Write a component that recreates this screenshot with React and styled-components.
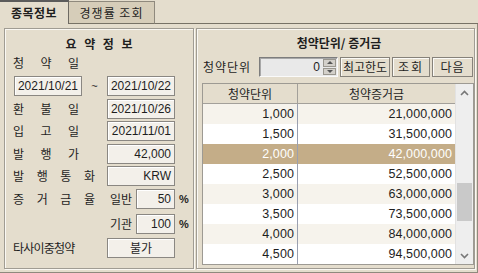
import React from "react";
import styled, { createGlobalStyle } from "styled-components";

const BG = "#e4ddcd";
const KR = `"Noto Sans CJK KR", "Liberation Sans", sans-serif`;
const NUM = `"Liberation Sans", "Noto Sans CJK KR", sans-serif`;

const Global = createGlobalStyle`
  html, body { margin: 0; padding: 0; background: ${BG}; }
  body { font-family: ${KR}; font-size: 12px; color: #1e1e1e; }
  * { box-sizing: border-box; }
`;

const Window = styled.div`
  width: 478px;
  height: 273px;
  display: flex;
  flex-direction: column;
  background: ${BG};
  overflow: hidden;
`;

const TabBar = styled.div`
  display: flex;
  align-items: flex-end;
  height: 24px;
`;

const Tab = styled.div`
  display: flex;
  align-items: center;
  justify-content: center;
  line-height: 14px;
  font-size: 12px;
  width: ${(p) => p.$w}px;
  height: ${(p) => (p.$active ? 24 : 23)}px;
  font-weight: ${(p) => (p.$active ? 700 : 400)};
  letter-spacing: ${(p) => (p.$active ? 0.5 : 1)}px;
  background: ${(p) => (p.$active ? BG : "#d6cdb9")};
  border-top: ${(p) => (p.$active ? "2px solid #5b5b5b" : "1px solid #8f897d")};
  border-right: 1px solid ${(p) => (p.$active ? "#6e6a63" : "#8f897d")};
  border-bottom: ${(p) => (p.$active ? "none" : "1px solid #777266")};
  padding-top: ${(p) => (p.$active ? 0 : 1)}px;
`;

const TabFill = styled.div`
  flex: 1;
  height: 1px;
  background: #777266;
`;

const Body = styled.div`
  flex: 1;
  display: flex;
  gap: 2px;
  padding: 4px 2px 3px 4px;
  border-right: 1px solid #8f897d;
  border-bottom: 1px solid #8f897d;
`;

const Panel = styled.div`
  width: ${(p) => p.$w}px;
  height: 241px;
  border: 1px solid #a09c93;
  box-shadow: inset 1px 1px 0 #faf8f3, 1px 1px 0 #faf8f3;
  display: flex;
  flex-direction: column;
`;

const LeftPanel = styled(Panel)`
  padding: 7px 0 0 8px;
`;

const RightPanel = styled(Panel)`
  padding: 6px 0 0 3px;
`;

const Title = styled.div`
  height: 16px;
  line-height: 16px;
  font-weight: 700;
  font-size: 12px;
  display: flex;
  justify-content: ${(p) => (p.$spread ? "space-between" : "center")};
  width: ${(p) => (p.$w ? `${p.$w}px` : "auto")};
  margin: 0 ${(p) => (p.$spread ? "auto" : "0")};
  position: relative;
  left: ${(p) => p.$shift || 0}px;
  letter-spacing: ${(p) => p.$ls || 0}px;
`;

const Spread = styled.div`
  width: ${(p) => p.$w}px;
  display: flex;
  justify-content: space-between;
  line-height: 16px;
`;

const LabelRow = styled.div`
  height: 16px;
  margin-top: 3px;
  display: flex;
  align-items: center;
`;

const RowList = styled.div`
  display: flex;
  flex-direction: column;
  gap: 2.5px;
  margin-top: 5px;
`;

const Row = styled.div`
  display: flex;
  align-items: center;
  height: 20px;
  margin-top: ${(p) => p.$extra || 0}px;
`;

const LabelCell = styled.div`
  width: 94px;
  display: flex;
  align-items: center;
  letter-spacing: ${(p) => p.$ls || 0}px;
  white-space: nowrap;
`;

const Field = styled.div`
  width: ${(p) => p.$w}px;
  height: 20px;
  margin-left: ${(p) => p.$ml || 0}px;
  border: 1px solid #8a8782;
  box-shadow: inset 1px 1px 0 #ffffff;
  background: #f3f0ea;
  display: flex;
  align-items: center;
  justify-content: ${(p) =>
    p.$align === "center" ? "center" : p.$align === "left" ? "flex-start" : "flex-end"};
  padding: 0 3px;
  font-family: ${(p) => (p.$kr ? KR : NUM)};
  font-size: 12px;
  line-height: 14px;
  white-space: nowrap;
`;

const Tilde = styled.div`
  width: 25px;
  text-align: center;
  font-family: ${NUM};
  font-size: 11px;
`;

const SubLabel = styled.div`
  width: 29px;
  padding-left: 3px;
  line-height: 16px;
`;

const Percent = styled.div`
  margin-left: 4px;
  font-family: ${NUM};
  font-size: 11px;
  font-weight: 700;
`;

/* right panel */
const Controls = styled.div`
  display: flex;
  align-items: center;
  height: 20px;
  margin-top: 6px;
`;

const CtlLabel = styled.div`
  width: 59px;
  padding-left: 3px;
  letter-spacing: 1px;
  line-height: 16px;
`;

const Spin = styled.div`
  width: 79px;
  height: 20px;
  display: flex;
  border-top: 1px solid #7d7d7d;
  border-left: 1px solid #7d7d7d;
  border-bottom: 1px solid #fafafa;
  border-right: 1px solid #fafafa;
  background: #e9e9e9;
  box-shadow: inset 1px 1px 0 #a8a8a8;
`;

const SpinValue = styled.div`
  flex: 1;
  display: flex;
  align-items: center;
  justify-content: flex-end;
  padding-right: 3px;
  font-family: ${NUM};
  font-size: 12px;
`;

const SpinButtons = styled.div`
  width: 14px;
  display: flex;
  flex-direction: column;
  padding: 1px 1px 1px 0;
  gap: 1px;
`;

const SpinBtn = styled.div`
  flex: 1;
  background: #d3d0ca;
  border: 1px solid #9a978f;
  display: flex;
  align-items: center;
  justify-content: center;
  &::after {
    content: "";
    width: 0;
    height: 0;
    border-left: 3px solid transparent;
    border-right: 3px solid transparent;
    ${(p) =>
      p.$up
        ? "border-bottom: 3px solid #555;"
        : "border-top: 3px solid #555;"}
  }
`;

const Button = styled.div`
  width: ${(p) => p.$w}px;
  height: 20px;
  margin-left: ${(p) => p.$ml}px;
  border: 1px solid #86827a;
  box-shadow: inset 1px 1px 0 #fbfaf6;
  background: ${BG};
  display: flex;
  align-items: center;
  justify-content: center;
  line-height: 14px;
  letter-spacing: ${(p) => p.$ls || 0}px;
  white-space: nowrap;
`;

const Grid = styled.div`
  margin: 6px 0 0 2px;
  width: 272px;
  height: 182px;
  border: 1px solid #9d9a93;
  display: flex;
  background: #fff;
`;

const Table = styled.div`
  display: grid;
  grid-template-columns: 95px 157px;
  grid-auto-rows: 20px;
  align-content: start;
`;

const HeadCell = styled.div`
  background: ${BG};
  border-bottom: 1px solid #a3a09a;
  border-right: 1px solid #a3a09a;
  display: flex;
  align-items: center;
  justify-content: center;
  line-height: 14px;
`;

const Cell = styled.div`
  display: flex;
  align-items: center;
  justify-content: flex-end;
  padding-right: ${(p) => (p.$first ? 3 : 3)}px;
  font-family: ${NUM};
  font-size: 12.5px;
  letter-spacing: 0.1px;
  background: ${(p) => (p.$sel ? "#c4ad88" : p.$alt ? "#f6f3ec" : "#ffffff")};
  color: ${(p) => (p.$sel ? "#ffffff" : "#1e1e1e")};
  border-right: ${(p) => (p.$first ? "1px solid #9aa0b0" : "none")};
`;

const Scroll = styled.div`
  width: 18px;
  display: flex;
  flex-direction: column;
  background: #eeeeee;
  border-left: 1px solid #e2e2e2;
`;

const ScrollArrow = styled.div`
  height: 17px;
  display: flex;
  align-items: center;
  justify-content: center;
  color: #7a7a7a;
`;

const Track = styled.div`
  flex: 1;
  display: flex;
  flex-direction: column;
`;

const Thumb = styled.div`
  width: 15px;
  margin-left: 1px;
  height: 38px;
  background: #c9c9c9;
`;

const Chevron = ({ up }) => (
  <svg width="9" height="6" viewBox="0 0 9 6">
    <path
      d={up ? "M1 5 L4.5 1.5 L8 5" : "M1 1 L4.5 4.5 L8 1"}
      fill="none"
      stroke="#777"
      strokeWidth="1.6"
    />
  </svg>
);

const SpreadText = ({ text, w }) => (
  <Spread $w={w}>
    {text.split("").map((c, i) => (
      <span key={i}>{c}</span>
    ))}
  </Spread>
);

const rows = [
  ["1,000", "21,000,000"],
  ["1,500", "31,500,000"],
  ["2,000", "42,000,000"],
  ["2,500", "52,500,000"],
  ["3,000", "63,000,000"],
  ["3,500", "73,500,000"],
  ["4,000", "84,000,000"],
  ["4,500", "94,500,000"],
];
const selected = 2;

export default function App() {
  const thumbTop = 82;
  return (
    <Window>
      <Global />
      <TabBar>
        <Tab $active $w={69}>종목정보</Tab>
        <Tab $w={86}>경쟁률 조회</Tab>
        <TabFill />
      </TabBar>
      <Body>
        <LeftPanel $w={190}>
          <Title $spread $w={67} $shift={-4}>
            <span>요</span>
            <span>약</span>
            <span>정</span>
            <span>보</span>
          </Title>
          <LabelRow>
            <SpreadText text="청약일" w={66} />
          </LabelRow>
          <RowList>
            <Row>
              <Field $w={68} $ml={1}>2021/10/21</Field>
              <Tilde>~</Tilde>
              <Field $w={68}>2021/10/22</Field>
            </Row>
            <Row>
              <LabelCell><SpreadText text="환불일" w={66} /></LabelCell>
              <Field $w={68}>2021/10/26</Field>
            </Row>
            <Row>
              <LabelCell><SpreadText text="입고일" w={66} /></LabelCell>
              <Field $w={68}>2021/11/01</Field>
            </Row>
            <Row>
              <LabelCell><SpreadText text="발행가" w={66} /></LabelCell>
              <Field $w={68}>42,000</Field>
            </Row>
            <Row>
              <LabelCell><SpreadText text="발행통화" w={82} /></LabelCell>
              <Field $w={68}>KRW</Field>
            </Row>
            <Row>
              <LabelCell><SpreadText text="증거금율" w={82} /></LabelCell>
              <SubLabel>일반</SubLabel>
              <Field $w={39}>50</Field>
              <Percent>%</Percent>
            </Row>
            <Row $extra={3}>
              <LabelCell />
              <SubLabel>기관</SubLabel>
              <Field $w={39}>100</Field>
              <Percent>%</Percent>
            </Row>
            <Row $extra={1}>
              <LabelCell $ls={-0.8}>타사이중청약</LabelCell>
              <Field $w={68} $align="center" $kr>불가</Field>
            </Row>
          </RowList>
        </LeftPanel>
        <RightPanel $w={279}>
          <Title $shift={2}>청약단위/ 증거금</Title>
          <Controls>
            <CtlLabel>청약단위</CtlLabel>
            <Spin>
              <SpinValue>0</SpinValue>
              <SpinButtons>
                <SpinBtn $up />
                <SpinBtn />
              </SpinButtons>
            </Spin>
            <Button $w={50} $ml={2}>최고한도</Button>
            <Button $w={38} $ml={2} $ls={2}>조회</Button>
            <Button $w={41} $ml={2} $ls={1}>다음</Button>
          </Controls>
          <Grid>
            <Table>
              <HeadCell>청약단위</HeadCell>
              <HeadCell style={{ borderRight: "none" }}>청약증거금</HeadCell>
              {rows.map(([u, m], i) => (
                <React.Fragment key={u}>
                  <Cell $first $sel={i === selected} $alt={i % 2 === 0}>{u}</Cell>
                  <Cell $sel={i === selected} $alt={i % 2 === 0}>{m}</Cell>
                </React.Fragment>
              ))}
            </Table>
            <Scroll>
              <ScrollArrow><Chevron up /></ScrollArrow>
              <Track>
                <Thumb style={{ marginTop: thumbTop }} />
              </Track>
              <ScrollArrow><Chevron /></ScrollArrow>
            </Scroll>
          </Grid>
        </RightPanel>
      </Body>
    </Window>
  );
}
